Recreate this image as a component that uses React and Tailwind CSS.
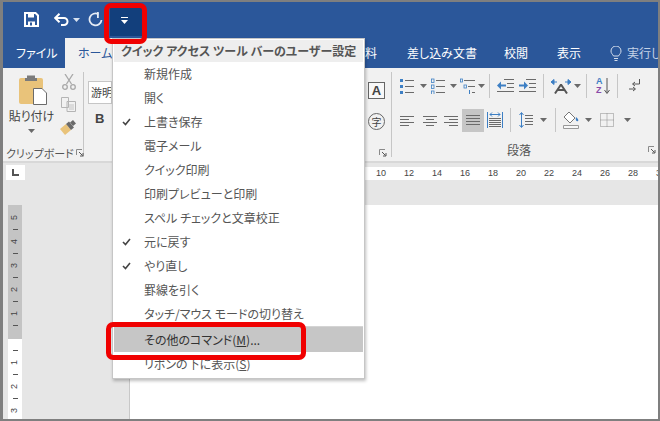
import React from "react";

const jp = "font-['Noto_Sans_CJK_JP',sans-serif] [font-feature-settings:'palt']";

const menuItems = [
  { label: "新規作成" },
  { label: "開く" },
  { label: "上書き保存", checked: true },
  { label: "電子メール" },
  { label: "クイック印刷" },
  { label: "印刷プレビューと印刷" },
  { label: "スペル チェックと文章校正" },
  { label: "元に戻す", checked: true },
  { label: "やり直し", checked: true },
  { label: "罫線を引く" },
  { label: "タッチ/マウス モードの切り替え" },
];

const rulerNums = [10, 12, 14, 16, 18, 20, 22, 24, 26, 28, 30];

function Caret({ className = "" }) {
  return (
    <svg width="7" height="4" viewBox="0 0 7 4" className={className}>
      <path d="M0 0h7L3.5 4z" fill="#6a6a6a" />
    </svg>
  );
}

function Launcher({ className = "" }) {
  return (
    <svg width="8" height="8" viewBox="0 0 8 8" className={className}>
      <path d="M.5 6V.5H6" fill="none" stroke="#8a8a8a" />
      <path d="M3 3l3.5 3.5M7 4v3H4" fill="none" stroke="#555" />
    </svg>
  );
}

function Lines({ rows, w = 14 }) {
  return (
    <svg width={w} height="16" viewBox={`0 0 ${w} 16`}>
      {rows.map(([x1, x2, y]) => (
        <path key={y} d={`M${x1} ${y + 0.5}H${x2}`} stroke="#6b6b6b" />
      ))}
    </svg>
  );
}

function BulletList() {
  return (
    <svg width="14" height="16" viewBox="0 0 14 16">
      {[2, 8, 14].map((y) => (
        <g key={y}>
          <rect x="0" y={y - 1} width="3" height="3" fill="#3d7fc4" />
          <path d={`M5 ${y + 0.5}H14`} stroke="#6b6b6b" />
        </g>
      ))}
    </svg>
  );
}

function NumberList() {
  return (
    <svg width="14" height="16" viewBox="0 0 14 16">
      {[2, 8, 14].map((y) => (
        <g key={y}>
          <rect x="0.5" y={y - 1} width="2.5" height="3.5" fill="none" stroke="#3d7fc4" strokeWidth=".8" />
          <path d={`M5 ${y + 0.5}H14`} stroke="#6b6b6b" />
        </g>
      ))}
    </svg>
  );
}

function MultiList() {
  return (
    <svg width="15" height="16" viewBox="0 0 15 16">
      <rect x="0.5" y="1" width="2" height="3" fill="none" stroke="#3d7fc4" strokeWidth=".8" />
      <path d="M4 2.5H15" stroke="#6b6b6b" />
      <rect x="4" y="7" width="2.5" height="3" fill="none" stroke="#3d7fc4" strokeWidth=".8" />
      <path d="M8 8.5H15" stroke="#6b6b6b" />
      <path d="M9.5 12v4" stroke="#3d7fc4" />
      <path d="M12 14.5H15" stroke="#6b6b6b" />
    </svg>
  );
}

function Indent({ flip }) {
  return (
    <svg width="17" height="14" viewBox="0 0 17 14">
      <path d="M7 .5h10M10 4.5h7M10 8.5h7M0 12.5h17" stroke="#6b6b6b" />
      <path
        d={flip ? "M0 5.5h5V2.5l4 4-4 4V7.5H0z" : "M9 5.5H4V2.5L0 6.5l4 4V7.5h5z"}
        fill="#3d7fc4"
      />
    </svg>
  );
}

function Sep() {
  return <div className="w-px h-[24px] bg-[#c6c6c6]" />;
}

export default function App() {
  return (
    <div className={`relative w-[660px] h-[421px] overflow-hidden bg-[#7f7f7f] pt-[2px] pl-[3px] pr-[2px] pb-[2px] ${jp}`}>
      <div className="flex flex-col h-full">
        {/* title bar */}
        <div className="h-[36px] bg-[#2b579a] flex items-center shrink-0">
          <svg width="15" height="15" viewBox="0 0 15 15" className="ml-[21px] -mt-[1px]">
            <path d="M1 1h10.5L14 3.5V14H1z" fill="none" stroke="#fff" strokeWidth="2" />
            <path d="M4 1.5h6v4H4zM4 9.5h7V14H4z" fill="#fff" />
            <path d="M6 10.5h2v3H6z" fill="#2b579a" />
          </svg>
          <svg width="15" height="14" viewBox="0 0 15 14" className="ml-[15px] -mt-[1px]">
            <path d="M2 5h8a3.5 3.5 0 0 1 0 7H7" fill="none" stroke="#fff" strokeWidth="2" />
            <path d="M5.5 .8L1.2 5l4.3 4.2" fill="none" stroke="#fff" strokeWidth="2" />
          </svg>
          <svg width="7" height="4" viewBox="0 0 7 4" className="ml-[4px]">
            <path d="M0 0h7L3.5 4z" fill="#d8e2f0" />
          </svg>
          <svg width="15" height="15" viewBox="0 0 15 15" className="ml-[8px] -mt-[1px]">
            <path d="M10.5 2.2A6 6 0 1 0 13.5 8" fill="none" stroke="#e6ecf5" strokeWidth="1.8" />
            <path d="M9 0v6h1.8V0z" fill="#e6ecf5" />
          </svg>
          <div className="ml-[7px] w-[32px] h-[30px] bg-[#123f7c] flex flex-col items-center justify-center gap-[2px] mt-[2px] pr-[3px] pb-[2px]">
            <div className="w-[7px] h-px bg-white" />
            <svg width="7" height="4" viewBox="0 0 7 4">
              <path d="M0 0h7L3.5 4z" fill="#fff" />
            </svg>
          </div>
        </div>

        {/* tabs */}
        <div className="h-[30px] bg-[#2b579a] flex items-center text-[12px] text-white shrink-0 overflow-hidden whitespace-nowrap">
          <span className="ml-[13px] w-[49px] shrink-0">ファイル</span>
          <div className="w-[60px] shrink-0 h-full bg-[#f1f1f1] text-[#2b579a] pl-[13px] flex items-center">ホーム</div>
          <span className="ml-[240px] w-[29px] shrink-0">料</span>
          <span className="ml-[13px] w-[97px] shrink-0">差し込み文書</span>
          <span className="w-[53px] shrink-0">校閲</span>
          <span className="w-[53px] shrink-0">表示</span>
          <svg width="12" height="15" viewBox="0 0 12 15" className="shrink-0">
            <path d="M3.5 10C2.5 8 1 7.5 1 5a5 5 0 0 1 10 0c0 2.500-1.500 3-2.500 5zM4 12.500h4M4.500 14.500h3" fill="none" stroke="#d5deec" />
          </svg>
          <span className="ml-[5px] shrink-0 text-[#c5d2e6]">実行し</span>
        </div>

        {/* ribbon */}
        <div className="h-[93px] bg-[#f1f1f1] flex shrink-0">
          <div className="w-[81px] shrink-0 flex flex-col border-r border-[#c6c6c6] my-[4px]">
            <div className="flex h-[68px] shrink-0">
              <div className="w-[57px] shrink-0 flex flex-col items-center pt-[3px]">
                <svg width="28" height="30" viewBox="0 0 28 30" className="ml-[3px]">
                  <rect x="0" y="3" width="24" height="26" rx="2" fill="#e9c37a" />
                  <path d="M8 3h8V0.500h-8z" fill="#7b7b7b" />
                  <rect x="6" y="3" width="12" height="3" fill="#7b7b7b" />
                  <path d="M14.500 13.500H23l4.500 4.500v11.500h-13z" fill="#fff" stroke="#6b6b6b" />
                </svg>
                <span className="text-[12px] text-[#444] leading-[16px] mt-[3px] whitespace-nowrap">貼り付け</span>
                <Caret className="mt-[5px]" />
              </div>
              <div className="flex flex-col items-center pt-[2px] gap-[7px] w-[17px] shrink-0">
                <svg width="14" height="16" viewBox="0 0 14 16">
                  <path d="M3 0l6.500 10M11 0L4.500 10" stroke="#a8a8a8" strokeWidth="1.300" />
                  <circle cx="3" cy="13" r="2.300" fill="none" stroke="#a8a8a8" strokeWidth="1.300" />
                  <circle cx="11" cy="13" r="2.300" fill="none" stroke="#a8a8a8" strokeWidth="1.300" />
                </svg>
                <svg width="15" height="15" viewBox="0 0 15 15">
                  <path d="M.5.500h7v10h-7zM6 4.500h8.500v10H6z" fill="#f1f1f1" stroke="#b4b4b4" />
                  <path d="M8 8h5M8 10h5M8 12h5" stroke="#c4c4c4" />
                </svg>
                <svg width="17" height="15" viewBox="0 0 17 15" className="mt-[1px]">
                  <path d="M0 9l6-5 5 6-6 5z" fill="#e9c37a" />
                  <path d="M6 4l3-2.500 5 6L11 10z" fill="#6a6a6a" />
                  <path d="M10 2.500L13 0l3 3.500-3 2.500z" fill="#6a6a6a" />
                </svg>
              </div>
            </div>
            <div className="flex items-center text-[11px] text-[#555] leading-[14px] pl-[3px] mt-[6px] whitespace-nowrap">
              <span className="w-[71px] shrink-0">クリップボード</span>
              <Launcher className="shrink-0 -ml-[1px]" />
            </div>
          </div>

          {/* font group, mostly behind the menu */}
          <div className="w-[308px] shrink-0 border-r border-[#c6c6c6] my-[4px] flex flex-col relative">
            <div className="ml-[4px] mt-[9px] w-[24px] h-[23px] bg-white border border-[#c6c6c6] text-[11px] text-[#444] leading-[21px] pl-[2px] overflow-hidden whitespace-nowrap">游明</div>
            <div className="ml-[11px] mt-[7px] font-['Liberation_Sans',sans-serif] font-bold text-[13px] text-[#444] leading-[16px]">B</div>
            <div className="absolute right-[6px] top-[10px] w-[17px] h-[17px] border border-[#666] bg-[#f8f8f8] flex items-center justify-center font-['Liberation_Sans',sans-serif] font-bold text-[13px] text-[#444]">A</div>
            <div className="absolute right-[6px] top-[41px] w-[17px] h-[17px] rounded-full border border-[#666] flex items-center justify-center text-[10px] text-[#444]">字</div>
            <Launcher className="absolute right-[4px] top-[77px]" />
          </div>

          {/* paragraph group */}
          <div className="flex-1 flex flex-col pl-[8px] min-w-0">
            <div className="h-[24px] mt-[6px] flex items-center shrink-0">
              <BulletList />
              <Caret className="ml-[6px]" />
              <div className="ml-[4px]"><NumberList /></div>
              <Caret className="ml-[5px]" />
              <div className="ml-[3px]"><MultiList /></div>
              <Caret className="ml-[3px]" />
              <div className="ml-[4px]"><Sep /></div>
              <div className="ml-[7px]"><Indent /></div>
              <div className="ml-[5px]"><Indent flip /></div>
              <div className="ml-[7px]"><Sep /></div>
              <svg width="20" height="15" viewBox="0 0 20 15" className="ml-[7px]">
                <path d="M10 5.500L4 14.500M10 5.500l6 9M6 11h8" fill="none" stroke="#555" strokeWidth="2" />
                <path d="M0 3l3-2.500V5.500zM20 3l-3-2.500V5.500zM3 3h3M14 3h3" fill="#3d7fc4" stroke="#3d7fc4" />
              </svg>
              <Caret className="ml-[3px]" />
              <div className="ml-[5px]"><Sep /></div>
              <div className="ml-[9px] w-[8px] flex flex-col font-['Liberation_Sans',sans-serif] text-[9px] leading-[9px] font-bold">
                <span className="text-[#3d7fc4]">A</span>
                <span className="text-[#8a4aa8]">Z</span>
              </div>
              <svg width="6" height="17" viewBox="0 0 6 17">
                <path d="M3 0v15M.5 12L3 15.500 5.500 12" fill="none" stroke="#555" />
              </svg>
              <div className="ml-[7px]"><Sep /></div>
              <svg width="11" height="14" viewBox="0 0 11 14" className="ml-[11px]">
                <path d="M10.500 0v5H4M6 3L3.500 5 6 7M0 10h6M4 8l2.500 2L4 12" fill="none" stroke="#555" />
              </svg>
            </div>
            <div className="h-[24px] mt-[10px] flex items-center shrink-0">
              <Lines rows={[[0, 14, 4], [0, 9, 7], [0, 14, 10], [0, 9, 13]]} />
              <div className="ml-[9px]"><Lines rows={[[0, 14, 4], [3, 11, 7], [0, 14, 10], [3, 11, 13]]} /></div>
              <div className="ml-[7px]"><Lines rows={[[0, 14, 4], [5, 14, 7], [0, 14, 10], [5, 14, 13]]} /></div>
              <div className="ml-[4px] w-[22px] h-[23px] bg-[#c6c6c6] flex items-center justify-center">
                <Lines rows={[[0, 14, 3], [0, 14, 6], [0, 14, 9], [0, 14, 12]]} />
              </div>
              <svg width="16" height="16" viewBox="0 0 16 16" className="ml-[3px]">
                <path d="M.5 0v16M15.500 0v16" stroke="#3d7fc4" />
                <path d="M3 2.500h10M5 .500L3 2.500l2 2M11 .500l2 2-2 2" fill="none" stroke="#3d7fc4" />
                <path d="M2 6.500h12M2 8.500h12M2 10.500h12M2 12.500h12M2 14.500h12" stroke="#6b6b6b" />
              </svg>
              <div className="ml-[7px]"><Sep /></div>
              <svg width="14" height="16" viewBox="0 0 14 16" className="ml-[8px]">
                <path d="M2.500 1v14M.5 3l2-2.500 2 2.500M.5 13l2 2.500 2-2.500" fill="none" stroke="#3d7fc4" />
                <path d="M6 3.500h8M6 6.500h8M6 9.500h8M6 12.500h8" stroke="#6b6b6b" />
              </svg>
              <Caret className="ml-[7px]" />
              <div className="ml-[8px]"><Sep /></div>
              <svg width="17" height="18" viewBox="0 0 17 18" className="ml-[7px]">
                <path d="M6 1l6 6-5 5-6-6z" fill="#fff" stroke="#777" />
                <path d="M13 6c2 2 3 3 2 4s-3 0-2-4z" fill="#3d7fc4" />
                <path d="M.5 14.500h15v3H.5z" fill="#f8f8f8" stroke="#999" />
              </svg>
              <Caret className="ml-[5px]" />
              <svg width="14" height="14" viewBox="0 0 14 14" className="ml-[8px]">
                <path d="M.5.500h13v13H.5zM7 .500v13M.5 7h13" fill="none" stroke="#8a8a8a" strokeDasharray="1 1" />
              </svg>
              <Caret className="ml-[10px]" />
            </div>
            <div className="flex items-center mt-[10px] shrink-0 whitespace-nowrap">
              <span className="ml-[107px] w-[24px] shrink-0 text-[12px] text-[#555] leading-[16px]">段落</span>
              <Launcher className="ml-[117px] shrink-0" />
            </div>
          </div>
        </div>

        {/* workspace */}
        <div className="flex-1 border-t-2 border-[#d8d8d8] bg-[#e6e6e6] flex min-h-0">
          <div className="w-[127px] shrink-0 border-r border-[#c8c8c8]">
            <div className="ml-[3px] mt-[2px] w-[19px] h-[15px] bg-white flex items-end justify-center pb-[4px]">
              <svg width="7" height="7" viewBox="0 0 7 7">
                <path d="M1 0v6h6" fill="none" stroke="#555" strokeWidth="2" />
              </svg>
            </div>
            <div className="ml-[5px] mt-[25px] w-[14px] h-[214px] flex flex-col items-center text-[9px] text-[#444] font-['Liberation_Sans',sans-serif] overflow-hidden">
              <div className="w-full h-[134px] shrink-0 bg-[#c4c4c4] flex flex-col items-center">
                {[5, 4, 3, 2, 1].map((n) => (
                  <div key={n} className="h-[24px] w-full flex flex-col items-center shrink-0">
                    <span className="-rotate-90 h-[13px] leading-[13px] mt-[6px] shrink-0">{n}</span>
                    <div className="w-[5px] h-px bg-[#555] mt-[5px] shrink-0" />
                  </div>
                ))}
              </div>
              <div className="w-full flex-1 bg-white flex flex-col items-center">
                <div className="w-[5px] h-px bg-[#555] mt-[11px] shrink-0" />
                {[1, 2, 3].map((n) => (
                  <div key={n} className="h-[24px] w-full flex flex-col items-center shrink-0">
                    <span className="-rotate-90 h-[13px] leading-[13px] mt-[5px] shrink-0">{n}</span>
                    <div className="w-[5px] h-px bg-[#555] mt-[5px] shrink-0" />
                  </div>
                ))}
              </div>
            </div>
          </div>
          <div className="flex-1 flex flex-col min-w-0">
            <div className="mt-[4px] h-[13px] bg-white flex items-center pl-[237px] overflow-hidden text-[9px] text-[#444] font-['Liberation_Sans',sans-serif] shrink-0">
              {rulerNums.map((n) => (
                <span key={n} className="w-[28px] shrink-0 text-center">{n}</span>
              ))}
            </div>
            <div className="mt-[25px] flex-1 bg-white" />
          </div>
        </div>
      </div>

      {/* dropdown menu */}
      <div className="absolute left-[112px] top-[38px] w-[253px] bg-white border border-[#c6c6c6] shadow-[1px_2px_3px_rgba(0,0,0,0.25)] text-[12px] text-[#555]">
        <div className="h-[22px] mx-px mt-px bg-[#eeeeee] flex items-center pl-[7px] font-bold text-[#555] whitespace-nowrap">
          クイック アクセス ツール バーのユーザー設定
        </div>
        {menuItems.map((item) => (
          <div key={item.label} className="h-[24px] flex items-center whitespace-nowrap">
            <div className="w-[31px] flex pl-[9px] shrink-0">
              {item.checked && (
                <svg width="9" height="8" viewBox="0 0 9 8">
                  <path d="M1 4l2.500 2.500L8 1" fill="none" stroke="#444" strokeWidth="1.600" />
                </svg>
              )}
            </div>
            {item.label}
          </div>
        ))}
        <div className="h-px bg-[#d4d4d4] mx-px" />
        <div className="h-[25px] mx-px bg-[#c6c6c6] flex items-center pl-[30px] text-[#333]">
          その他のコマンド(<span className="underline">M</span>)...
        </div>
        <div className="h-[24px] flex items-center pl-[31px] mb-[2px]">
          リボンの下に表示(<span className="underline">S</span>)
        </div>
      </div>

      {/* red callouts */}
      <div className="absolute left-[104px] top-[3px] w-[43px] h-[41px] border-[5px] border-[#f00000] rounded-[7px]" />
      <div className="absolute left-[106px] top-[322px] w-[200px] h-[38px] border-[5px] border-[#f00000] rounded-[7px]" />
    </div>
  );
}
